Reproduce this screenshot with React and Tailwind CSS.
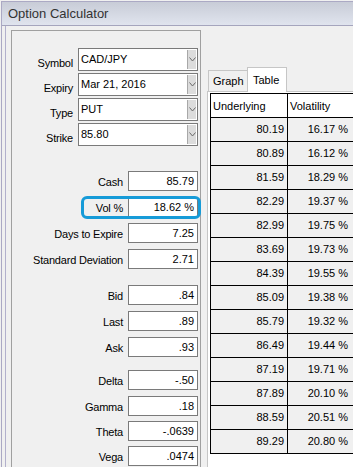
import React from "react";

const combos = [
  ["Symbol", "CAD/JPY"],
  ["Expiry", "Mar 21, 2016"],
  ["Type", "PUT"],
  ["Strike", "85.80"],
];

const fields = [
  { label: "Cash", value: "85.79", mt: "mt-[25px]" },
  { label: "Vol %", value: "18.62 %", mt: "mt-[6px]", hl: true },
  { label: "Days to Expire", value: "7.25", mt: "mt-[6px]" },
  { label: "Standard Deviation", value: "2.71", mt: "mt-[6px]" },
  { label: "Bid", value: ".84", mt: "mt-[16px]" },
  { label: "Last", value: ".89", mt: "mt-[6px]" },
  { label: "Ask", value: ".93", mt: "mt-[6px]" },
  { label: "Delta", value: "-.50", mt: "mt-[13px]" },
  { label: "Gamma", value: ".18", mt: "mt-[6px]" },
  { label: "Theta", value: "-.0639", mt: "mt-[5px]" },
  { label: "Vega", value: ".0474", mt: "mt-[5px]" },
];

const rows = [
  ["80.19", "16.17 %"],
  ["80.89", "16.12 %"],
  ["81.59", "18.29 %"],
  ["82.29", "19.37 %"],
  ["82.99", "19.75 %"],
  ["83.69", "19.73 %"],
  ["84.39", "19.55 %"],
  ["85.09", "19.38 %"],
  ["85.79", "19.32 %"],
  ["86.49", "19.44 %"],
  ["87.19", "19.71 %"],
  ["87.89", "20.10 %"],
  ["88.59", "20.51 %"],
  ["89.29", "20.80 %"],
];

function Combo({ value }) {
  return (
    <div className="w-[120px] h-[23px] border border-[#7a7a7a] bg-white flex">
      <div className="flex-1 flex items-center pl-[2px] text-black">{value}</div>
      <div className="w-[9px] my-px mr-px bg-[#dcdcdc] border-l border-[#a8a8a8] flex items-center justify-center">
        <svg width="7" height="5" viewBox="0 0 7 5">
          <polyline points="0.5,0.5 3.5,4 6.5,0.5" fill="none" stroke="#6a6a6a" strokeWidth="1" />
        </svg>
      </div>
    </div>
  );
}

export default function App() {
  return (
    <div
      className="w-[353px] h-[467px] overflow-hidden bg-[#f0f0f0] pl-px pt-px text-[11px] text-black"
      style={{ fontFamily: '"Liberation Sans", Arial, sans-serif' }}
    >
      <div className="h-full border-l border-t border-[#aba9c4] flex flex-col">
        <div className="h-[24px] shrink-0 bg-gradient-to-b from-[#c8ccd7] to-[#e0e4ee] border-b border-[#a5a5bd] pl-[6px] pt-[4px] text-[13px] leading-[16px] text-[#333]">
          Option Calculator
        </div>
        <div className="flex-1 flex pl-[3px]">
          <div className="flex-1 flex border-l border-[#b2b0cc] pl-[5px]">
            {/* Left panel */}
            <div className="w-[190px] mt-[4px] border-l border-t border-r border-[#a0a0a0] pt-[17px] flex flex-col">
              <div className="flex flex-col gap-[2px]">
                {combos.map(([l, v]) => (
                  <div key={l} className="flex items-start gap-[5px]">
                    <div className="w-[61px] text-right pt-[8px] leading-[14px] tracking-[-0.2px]">{l}</div>
                    <Combo value={v} />
                  </div>
                ))}
              </div>
              <div className="flex flex-col">
                {fields.map((f) => (
                  <div key={f.label} className={`relative flex items-center gap-[5px] h-[20px] ${f.mt}`}>
                    <div className="w-[111px] text-right pt-[2px] leading-[14px] tracking-[-0.2px] whitespace-nowrap">{f.label}</div>
                    <div className="w-[70px] h-[20px] border border-[#7a7a7a] bg-white flex items-center justify-end pr-[3px] leading-[14px]">
                      {f.value}
                    </div>
                    {f.hl && (
                      <div className="absolute left-[69px] -right-px -top-px -bottom-[2px] border-[3px] border-[#169bd8] rounded-[6px]" />
                    )}
                  </div>
                ))}
              </div>
            </div>
            {/* Right area */}
            <div className="flex-1 flex flex-col pl-[6px] pt-[41px]">
              <div className="flex items-end -mb-px pl-px">
                <div className="w-[39px] h-[22px] border-l border-t border-[#c6c6c6] bg-[#f0f0f0] pl-[4px] pt-[3px] leading-[14px]">
                  Graph
                </div>
                <div className="relative z-10 w-[40px] h-[25px] border-l border-t border-r border-[#c6c6c6] bg-white pl-[5px] pt-[5px] leading-[14px]">
                  Table
                </div>
              </div>
              <div className="flex-1 bg-white border-l border-t border-[#c6c6c6] pl-[2px] pt-px">
                <div className="border-l border-t border-black w-[150px]">
                  <div className="flex h-[24px] border-b border-black bg-white">
                    <div className="w-[77px] border-r border-black flex items-center pl-[2px] pt-[2px]">Underlying</div>
                    <div className="w-[66px] flex items-center pl-[2px] pt-[2px]">Volatility</div>
                  </div>
                  {rows.map(([u, v]) => (
                    <div key={u} className="flex h-[24px] border-b border-black bg-[#f0f0f0]">
                      <div className="w-[77px] border-r border-black flex items-center justify-end pr-[3px]">{u}</div>
                      <div className="w-[66px] flex items-center justify-end pr-[6px]">{v}</div>
                    </div>
                  ))}
                </div>
              </div>
            </div>
          </div>
        </div>
      </div>
    </div>
  );
}
